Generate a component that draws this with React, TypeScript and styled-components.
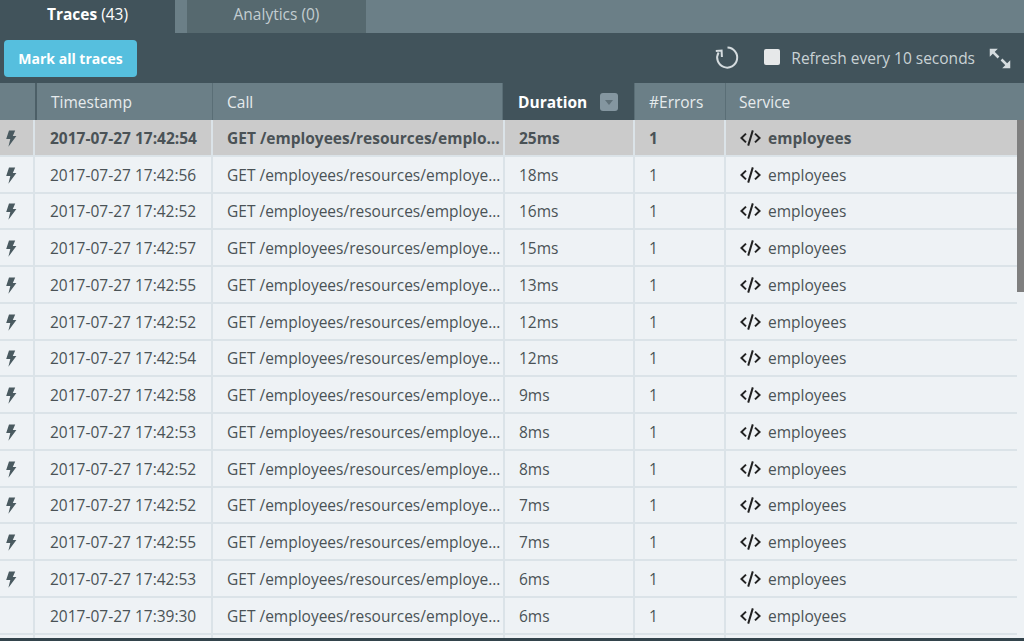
import React from 'react';
import styled, { createGlobalStyle } from 'styled-components';

const GlobalStyle = createGlobalStyle`
    html, body {
        margin: 0;
        padding: 0;
        overflow: hidden;
    }
    body {
        font-family: "Open Sans", "Liberation Sans", sans-serif;
    }
`;

const Page = styled.div`
    width: 1024px;
    height: 641px;
    background: #41535b;
    display: flex;
    flex-direction: column;
    overflow: hidden;
`;

const Tabs = styled.div`
    height: 33px;
    display: flex;
    background: #6b7f87;
    flex-shrink: 0;
`;

const Tab = styled.div<{ $active?: boolean }>`
    height: 33px;
    width: ${(p) => (p.$active ? '175px' : '179px')};
    margin-right: ${(p) => (p.$active ? '12px' : '0')};
    background: ${(p) => (p.$active ? '#41535b' : '#56696f')};
    color: ${(p) => (p.$active ? '#fff' : '#c3cdd1')};
    font-size: 15.5px;
    display: flex;
    align-items: center;
    justify-content: center;
    padding-bottom: 5px;
    box-sizing: border-box;
    b {
        font-weight: 700;
        margin-right: 4px;
    }
`;

const Toolbar = styled.div`
    height: 50px;
    display: flex;
    align-items: center;
    padding: 0 13px 0 4px;
    flex-shrink: 0;
`;

const MarkButton = styled.button`
    width: 133px;
    height: 37px;
    border: 0;
    border-radius: 4px;
    background: #56bfde;
    color: #fff;
    font-family: inherit;
    font-size: 14px;
    font-weight: 700;
    padding: 0;
`;

const Spacer = styled.div`
    flex: 1;
`;

const RefreshIcon = styled.svg`
    width: 24px;
    height: 24px;
    margin-right: 25px;
`;

const CheckBox = styled.span`
    width: 16px;
    height: 16px;
    background: #e6e8e9;
    border-radius: 2px;
    margin-right: 11px;
    margin-top: -3px;
`;

const RefreshLabel = styled.span`
    color: #c9d2d5;
    font-size: 15.5px;
    margin-right: 14px;
`;

const ExpandIcon = styled.svg`
    width: 22px;
    height: 22px;
`;

const Table = styled.div`
    flex: 1;
    position: relative;
    min-height: 0;
`;

const HeaderRow = styled.div`
    height: 37px;
    display: grid;
    grid-template-columns: 37px 176px 290px 132px 91px 1fr;
    background: #6b7f87;
`;

const HeaderCell = styled.div<{ $sorted?: boolean }>`
    display: flex;
    align-items: center;
    justify-content: ${(p) => (p.$sorted ? 'space-between' : 'flex-start')};
    padding: 0 ${(p) => (p.$sorted ? '16px' : '0')} 0 ${(p) => (p.$sorted ? '15px' : '14px')};
    box-sizing: border-box;
    font-size: 15.5px;
    color: ${(p) => (p.$sorted ? '#fff' : '#e6ebed')};
    font-weight: ${(p) => (p.$sorted ? 700 : 400)};
    background: ${(p) => (p.$sorted ? '#41535b' : 'transparent')};
    border-right: 1px solid #5a6e76;
    &:first-child {
        border-right: 2px solid #4c5f67;
    }
    &:last-child {
        border-right: 0;
        padding-left: 13px;
    }
`;

const SortButton = styled.span`
    width: 18px;
    height: 18px;
    border-radius: 3px;
    background: #8496a0;
    display: flex;
    align-items: center;
    justify-content: center;
    &::after {
        content: '';
        border-left: 4px solid transparent;
        border-right: 4px solid transparent;
        border-top: 5px solid #5f7078;
        margin-top: 2px;
    }
`;

const Body = styled.div`
    background: #eef2f5;
    height: 518px;
    overflow: hidden;
`;

const Row = styled.div<{ $selected?: boolean }>`
    height: 36.75px;
    box-sizing: border-box;
    display: grid;
    grid-template-columns: 35px 178px 292px 130px 91px 1fr;
    width: 1017px;
    background: ${(p) => (p.$selected ? '#cbcbcb' : '#eef2f5')};
    color: #4a5256;
    font-weight: ${(p) => (p.$selected ? 700 : 400)};
    font-size: 15.5px;
    border-bottom: 2px solid #dbe3e8;
`;

const Cell = styled.div`
    display: flex;
    align-items: center;
    padding: 1px 0 0 14px;
    min-width: 0;
    border-right: 2px solid #dbe3e8;
    box-sizing: border-box;
    white-space: nowrap;
    &:first-child {
        padding-left: 5px;
    }
    &:nth-child(2) {
        padding-left: 15px;
    }
    &:last-child {
        border-right: 0;
    }
`;

const Ellipsis = styled.span`
    overflow: hidden;
    text-overflow: ellipsis;
    display: block;
    width: 100%;
`;

const CodeIcon = styled.svg`
    width: 21px;
    height: 16px;
    margin-right: 7px;
    flex-shrink: 0;
`;

const BoltIcon = styled.svg`
    width: 12px;
    height: 17px;
    margin-top: 1px;
`;

const ScrollThumb = styled.div`
    position: absolute;
    top: 37px;
    right: 0;
    width: 7px;
    height: 172px;
    background: #7f7f7f;
`;

const BottomBar = styled.div`
    position: absolute;
    left: 0;
    right: 0;
    bottom: 0;
    height: 3px;
    background: #33444c;
`;

const Bolt = () => (
    <BoltIcon viewBox="0 0 12 17">
        <path d="M4 0.5h6.2L7.8 6h3.6L3.4 16.8l1.9-7.8H1.2z" fill="#4a5a60" />
    </BoltIcon>
);

const rows = [
    ['2017-07-27 17:42:54', '25ms'],
    ['2017-07-27 17:42:56', '18ms'],
    ['2017-07-27 17:42:52', '16ms'],
    ['2017-07-27 17:42:57', '15ms'],
    ['2017-07-27 17:42:55', '13ms'],
    ['2017-07-27 17:42:52', '12ms'],
    ['2017-07-27 17:42:54', '12ms'],
    ['2017-07-27 17:42:58', '9ms'],
    ['2017-07-27 17:42:53', '8ms'],
    ['2017-07-27 17:42:52', '8ms'],
    ['2017-07-27 17:42:52', '7ms'],
    ['2017-07-27 17:42:55', '7ms'],
    ['2017-07-27 17:42:53', '6ms'],
    ['2017-07-27 17:39:30', '6ms'],
];

const App = () => {
    return (
        <Page>
            <GlobalStyle />
            <Tabs>
                <Tab $active>
                    <b>Traces</b> (43)
                </Tab>
                <Tab>Analytics (0)</Tab>
            </Tabs>
            <Toolbar>
                <MarkButton>Mark all traces</MarkButton>
                <Spacer />
                <RefreshIcon viewBox="0 0 24 24" fill="none" stroke="#d5dcdf" strokeWidth="2">
                    <path d="M12.5 1.6A10 10 0 1 1 3.6 6.5" />
                    <path d="M0.8 5L6.6 4.6L6.9 11" />
                </RefreshIcon>
                <CheckBox />
                <RefreshLabel>Refresh every 10 seconds</RefreshLabel>
                <ExpandIcon viewBox="0 0 22 22" fill="#d5dcdf" stroke="#d5dcdf" strokeWidth="1.5">
                    <path d="M1.5 2.5H7L1.5 8z" />
                    <path d="M3 4l6.5 6.5" strokeWidth="2.5" />
                    <path d="M20.5 20.5H15L20.5 15z" />
                    <path d="M19 19l-6.5-6.5" strokeWidth="2.5" />
                </ExpandIcon>
            </Toolbar>
            <Table>
                <HeaderRow>
                    <HeaderCell />
                    <HeaderCell>Timestamp</HeaderCell>
                    <HeaderCell>Call</HeaderCell>
                    <HeaderCell $sorted>
                        Duration <SortButton />
                    </HeaderCell>
                    <HeaderCell>#Errors</HeaderCell>
                    <HeaderCell>Service</HeaderCell>
                </HeaderRow>
                <Body>
                    {rows.map(([time, duration], idx) => (
                        <Row key={idx} $selected={idx === 0}>
                            <Cell>{idx < 13 ? <Bolt /> : null}</Cell>
                            <Cell>{time}</Cell>
                            <Cell>
                                <Ellipsis>GET /employees/resources/employees/1</Ellipsis>
                            </Cell>
                            <Cell>{duration}</Cell>
                            <Cell>1</Cell>
                            <Cell>
                                <CodeIcon viewBox="0 0 21 16" fill="none" stroke="#222" strokeWidth="2">
                                    <path d="M6 3.6L1.4 8 6 12.4M15 3.6L19.6 8 15 12.4M12.8 0.4L8.2 15.6" />
                                </CodeIcon>
                                employees
                            </Cell>
                        </Row>
                    ))}
                    <Row>
                        <Cell />
                        <Cell />
                        <Cell />
                        <Cell />
                        <Cell />
                        <Cell />
                    </Row>
                </Body>
                <ScrollThumb />
                <BottomBar />
            </Table>
        </Page>
    );
};

export default App;
